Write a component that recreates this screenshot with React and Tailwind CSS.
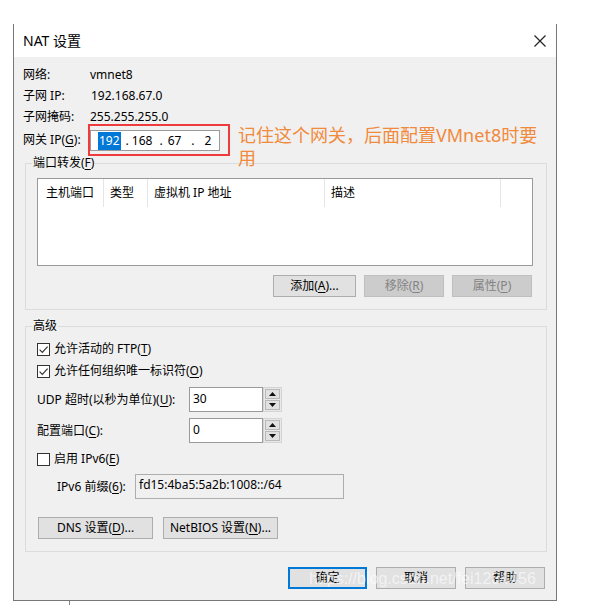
import React from 'react'

const font = "font-['Noto_Sans','Noto_Sans_CJK_SC',sans-serif]"

function U({ children }) {
  return <span className="underline underline-offset-2">{children}</span>
}

function Btn({ children, disabled, primary, className = '' }) {
  let look = 'bg-[#e1e1e1] border border-[#adadad] text-black'
  if (disabled) look = 'bg-[#cccccc] border border-[#bfbfbf] text-[#838383]'
  if (primary) look = 'bg-[#e1e1e1] border-2 border-[#0078d7] text-black'
  return (
    <div className={`h-[22px] flex items-center justify-center text-[12px] ${look} ${className}`}>
      {children}
    </div>
  )
}

function Check({ checked }) {
  return (
    <span className="w-[13px] h-[13px] border border-[#333333] bg-white flex items-center justify-center shrink-0">
      {checked && (
        <svg width="11" height="11" viewBox="0 0 11 11">
          <path d="M1.6 5.6 L4.3 8.3 L9.6 2.6" fill="none" stroke="#333333" strokeWidth="1.2" />
        </svg>
      )}
    </span>
  )
}

function Spin() {
  return (
    <div className="w-[19px] h-[25px] flex flex-col gap-[1px] p-[1px] border border-[#d4d4d4] bg-[#e8e8e8]">
      <div className="flex-1 bg-[#e1e1e1] border border-[#b8b8b8] flex items-center justify-center">
        <svg width="7" height="4" viewBox="0 0 7 4"><path d="M3.5 0 L7 4 L0 4 Z" fill="#111" /></svg>
      </div>
      <div className="flex-1 bg-[#e1e1e1] border border-[#b8b8b8] flex items-center justify-center">
        <svg width="7" height="4" viewBox="0 0 7 4"><path d="M0 0 L7 0 L3.5 4 Z" fill="#111" /></svg>
      </div>
    </div>
  )
}

function NumRow({ label, value, className = '' }) {
  return (
    <div className={`flex items-center h-[25px] ${className}`}>
      <span className="w-[152px]">{label}</span>
      <div className="w-[74px] h-[25px] bg-white border border-[#9a9a9a] pl-[3px] pt-[2px] text-[12px] leading-[18px]">{value}</div>
      <Spin />
    </div>
  )
}

export default function App() {
  return (
    <div className={`w-[592px] h-[610px] bg-white pt-[24px] pl-[13px] text-[12px] text-black ${font}`}>
      <div className="w-[544px] border-l border-r border-b border-[#777777] flex flex-col">
        {/* title */}
        <div className="h-[33px] bg-white flex items-center justify-between pl-[9px] pr-[10px]">
          <span className="text-[14px]">NAT 设置</span>
          <svg width="12" height="12" viewBox="0 0 12 12">
            <path d="M0.5 0.5 L11.5 11.5 M11.5 0.5 L0.5 11.5" stroke="#222" strokeWidth="1.2" />
          </svg>
        </div>

        {/* body */}
        <div className="bg-[#f0f0f0] pl-[9px] pt-[7px] pb-[11px]">
          <div className="flex items-center h-[21px]">
            <span className="w-[67px]">网络:</span>
            <span>vmnet8</span>
          </div>
          <div className="flex items-center h-[21px]">
            <span className="w-[68px]">子网 IP:</span>
            <span>192.168.67.0</span>
          </div>
          <div className="flex items-center h-[21px]">
            <span className="w-[67px]">子网掩码:</span>
            <span>255.255.255.0</span>
          </div>

          {/* gateway */}
          <div className="flex items-start h-[32px] -mt-[3px]">
            <span className="w-[65px] h-[32px] flex items-center">网关 IP(<U>G</U>):</span>
            <div className="w-[142px] h-[32px] border-2 border-[#ef3b3b] pt-[4px] shrink-0">
              <div className="w-[130px] h-[21px] bg-white border border-[#9a9a9a] flex items-center pl-[7px] text-[12px]">
                <span className="bg-[#0078d7] text-white px-[1px]">192</span>
                <span className="ml-[5px]">.</span>
                <span className="ml-[3px]">168</span>
                <span className="ml-[7px]">.</span>
                <span className="ml-[5px]">67</span>
                <span className="ml-[10px]">.</span>
                <span className="ml-[10px]">2</span>
              </div>
            </div>
            <span className="relative z-10 ml-[8px] w-[302px] text-[18px] leading-[23px] text-[#f08a3c]">
              记住这个网关，后面配置VMnet8时要用
            </span>
          </div>

          {/* port forwarding */}
          <fieldset className="ml-[2px] mr-[9px] -mt-[1px] border border-[#dcdcdc] pb-[12px]">
            <legend className="ml-[6px] px-[1px] leading-[16px]">端口转发(<U>F</U>)</legend>
            <div className="ml-[11px] mr-[13px] mt-[7px] h-[88px] bg-white border border-[#9a9a9a]">
              <div className="flex h-[28px] items-center">
                <div className="w-[66px] pl-[8px] h-full flex items-center border-r border-[#e5e5e5]">主机端口</div>
                <div className="w-[44px] pl-[6px] h-full flex items-center border-r border-[#e5e5e5]">类型</div>
                <div className="w-[177px] pl-[6px] h-full flex items-center border-r border-[#e5e5e5]">虚拟机 IP 地址</div>
                <div className="w-[176px] pl-[6px] h-full flex items-center border-r border-[#e5e5e5]">描述</div>
              </div>
            </div>
            <div className="flex justify-end gap-[8px] mr-[14px] mt-[9px]">
              <Btn className="w-[83px] h-[21px]">添加(<U>A</U>)...</Btn>
              <Btn disabled className="w-[80px]">移除(<U>R</U>)</Btn>
              <Btn disabled className="w-[80px]">属性(<U>P</U>)</Btn>
            </div>
          </fieldset>

          {/* advanced */}
          <fieldset className="ml-[2px] mr-[9px] mt-[8px] border border-[#dcdcdc] pb-[12px] pl-[11px]">
            <legend className="ml-[-5px] px-[1px] leading-[16px]">高级</legend>
            <div className="flex items-center gap-[4px] h-[20px] mt-[5px]">
              <Check checked />
              <span>允许活动的 FTP(<U>T</U>)</span>
            </div>
            <div className="flex items-center gap-[4px] h-[20px] mt-[2px]">
              <Check checked />
              <span>允许任何组织唯一标识符(<U>O</U>)</span>
            </div>
            <NumRow className="mt-[6px]" label={<>UDP 超时(以秒为单位)(<U>U</U>):</>} value="30" />
            <NumRow className="mt-[6px]" label={<>配置端口(<U>C</U>):</>} value="0" />
            <div className="flex items-center gap-[4px] h-[20px] mt-[6px]">
              <Check />
              <span>启用 IPv6(<U>E</U>)</span>
            </div>
            <div className="flex items-center h-[25px] mt-[5px] pl-[20px]">
              <span className="w-[78px]">IPv6 前缀(<U>6</U>):</span>
              <div className="w-[209px] h-[25px] border border-[#adadad] bg-[#f0f0f0] pl-[3px] pt-[1px] leading-[18px]">
                fd15:4ba5:5a2b:1008::/64
              </div>
            </div>
            <div className="flex gap-[10px] mt-[18px] ml-[1px]">
              <Btn className="w-[115px]">DNS 设置(<U>D</U>)...</Btn>
              <Btn className="w-[115px]">NetBIOS 设置(<U>N</U>)...</Btn>
            </div>
          </fieldset>

          {/* footer */}
          <div className="relative flex justify-end gap-[9px] mr-[11px] mt-[15px]">
            <Btn primary className="w-[79px]">确定</Btn>
            <Btn className="w-[80px]">取消</Btn>
            <Btn className="w-[80px]">帮助</Btn>
            <span className="absolute left-[286px] top-[1px] text-[16px] leading-[22px] text-white/60 font-['Liberation_Sans',sans-serif] whitespace-nowrap">
              https://blog.csdn.net/fei1234456
            </span>
          </div>
        </div>
      </div>
      <div className="ml-[56px] w-px h-[4px] bg-[#888888]" />
    </div>
  )
}
